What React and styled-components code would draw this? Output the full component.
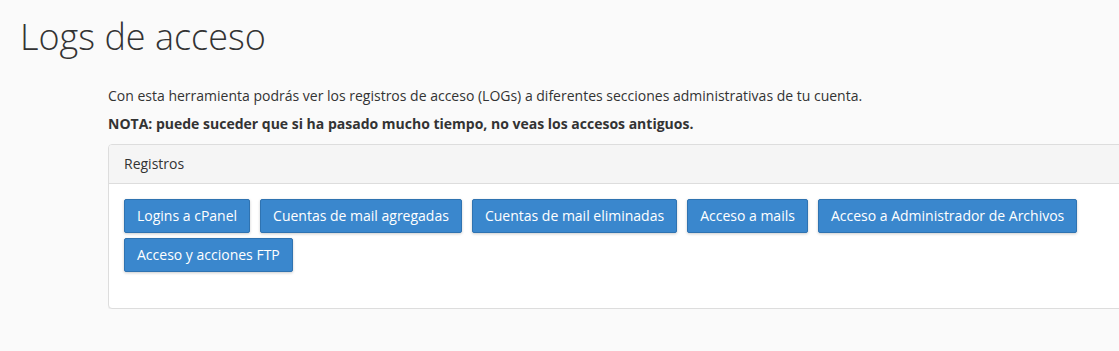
import styled, { createGlobalStyle } from 'styled-components';

const GlobalStyle = createGlobalStyle`
	html, body {
		margin: 0;
		padding: 0;
		background: #fafafa;
		overflow: hidden;
	}
	body {
		font-family: 'Open Sans', 'Liberation Sans', sans-serif;
		font-size: 14px;
		line-height: 20px;
		color: #333;
	}
`;

const LOG_BUTTONS = [
	'Logins a cPanel',
	'Cuentas de mail agregadas',
	'Cuentas de mail eliminadas',
	'Acceso a mails',
	'Acceso a Administrador de Archivos',
	'Acceso y acciones FTP',
];

const App = () => {
	return (
		<Page>
			<GlobalStyle />
			<PageTitle>Logs de acceso</PageTitle>
			<Content>
				<Intro>
					Con esta herramienta podrás ver los registros de acceso (LOGs) a
					diferentes secciones administrativas de tu cuenta.
				</Intro>
				<Intro>
					<strong>
						NOTA: puede suceder que si ha pasado mucho tiempo, no veas los
						accesos antiguos.
					</strong>
				</Intro>
				<Panel>
					<PanelHeading>Registros</PanelHeading>
					<PanelBody>
						{LOG_BUTTONS.map((label) => (
							<LogButton key={label} type='button'>
								{label}
							</LogButton>
						))}
					</PanelBody>
				</Panel>
			</Content>
		</Page>
	);
};

export default App;

const Page = styled.div`
	padding: 17px 0 0 20px;
	height: 351px;
	box-sizing: border-box;
	overflow: hidden;
`;

const PageTitle = styled.h1`
	margin: 0;
	font-size: 36px;
	line-height: 39.6px;
	font-weight: 300;
	color: #333;
`;

const Content = styled.div`
	margin: 29px 0 0 88px;
	overflow: hidden;
`;

const Intro = styled.p`
	margin: 0 0 8px;
	white-space: nowrap;

	strong {
		font-weight: 700;
	}
`;

const Panel = styled.div`
	margin-top: 10px;
	width: 1080px;
	background: #fff;
	border: 1px solid #ddd;
	border-radius: 4px;
	box-shadow: 0 1px 1px rgba(0, 0, 0, 0.05);
`;

const PanelHeading = styled.div`
	padding: 9px 15px;
	background: #f5f5f5;
	border-bottom: 1px solid #ddd;
	border-radius: 3px 3px 0 0;
	color: #333;
`;

const PanelBody = styled.div`
	display: flex;
	flex-wrap: wrap;
	width: 970px;
	padding: 15px 15px 31px;
`;

const LogButton = styled.button`
	margin: 0 10px 5px 0;
	padding: 6px 12px;
	font-family: inherit;
	font-size: 14px;
	line-height: 20px;
	color: #fff;
	background: #3a87cd;
	border: 1px solid #2f73b1;
	border-radius: 2px;
	box-shadow: 0 1px 3px rgba(0, 0, 0, 0.2);
	cursor: pointer;
	white-space: nowrap;
`;
